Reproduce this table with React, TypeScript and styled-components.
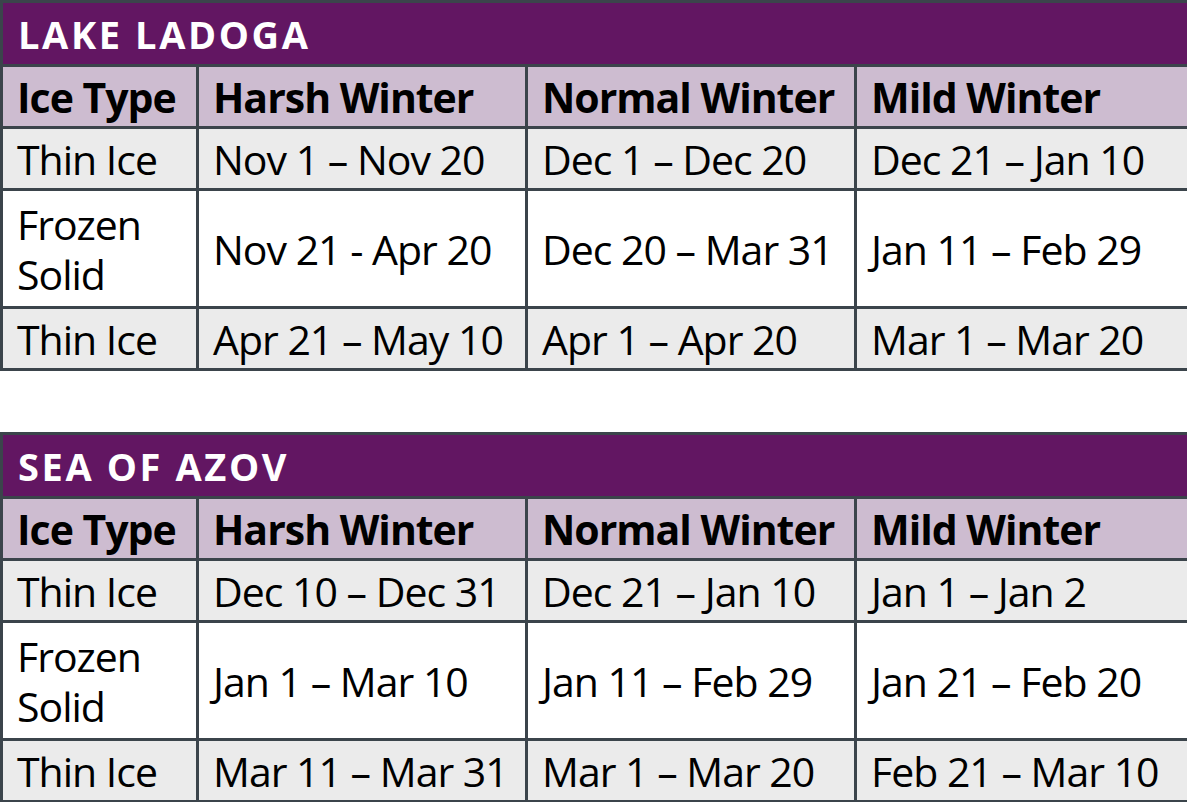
import styled, { createGlobalStyle } from "styled-components";

const GlobalStyle = createGlobalStyle`
  body {
    margin: 0;
    background: #ffffff;
    font-family: "Open Sans", "Noto Sans", sans-serif;
  }
`;

const Page = styled.div`
  display: flex;
  flex-direction: column;
  row-gap: 61px;
  width: 1187px;
`;

const Table = styled.table`
  width: 1187px;
  border-collapse: collapse;
  table-layout: fixed;
  border: 3px solid #3b444b;
`;

const TitleCell = styled.th`
  height: 61px;
  padding: 0 0 0 15px;
  background: #621662;
  color: #ffffff;
  text-align: left;
  font-size: 38px;
  font-weight: 700;
  letter-spacing: 2.6px;
  border: 3px solid #3b444b;
`;

const HeadCell = styled.th`
  height: 59px;
  padding: 0 0 0 14px;
  background: #cdbcd0;
  color: #000000;
  text-align: left;
  font-size: 41px;
  font-weight: 700;
  letter-spacing: -1px;
  white-space: nowrap;
  border: 3px solid #3b444b;
`;

const Row = styled.tr<{ $shade: boolean }>`
  background: ${(p) => (p.$shade ? "#ebebeb" : "#ffffff")};
`;

const Cell = styled.td<{ $tall: boolean }>`
  height: ${(p) => (p.$tall ? "115px" : "59px")};
  padding: 0 0 0 14px;
  color: #000000;
  font-size: 41px;
  line-height: 50px;
  letter-spacing: -1px;
  white-space: nowrap;
  border: 3px solid #3b444b;
`;

const TypeCell = styled(Cell)`
  white-space: normal;
`;

type Lake = {
  name: string;
  rows: { type: string; harsh: string; normal: string; mild: string }[];
};

const lakes: Lake[] = [
  {
    name: "LAKE LADOGA",
    rows: [
      { type: "Thin Ice", harsh: "Nov 1 – Nov 20", normal: "Dec 1 – Dec 20", mild: "Dec 21 – Jan 10" },
      { type: "Frozen Solid", harsh: "Nov 21 - Apr 20", normal: "Dec 20 – Mar 31", mild: "Jan 11 – Feb 29" },
      { type: "Thin Ice", harsh: "Apr 21 – May 10", normal: "Apr 1 – Apr 20", mild: "Mar 1 – Mar 20" },
    ],
  },
  {
    name: "SEA OF AZOV",
    rows: [
      { type: "Thin Ice", harsh: "Dec 10 – Dec 31", normal: "Dec 21 – Jan 10", mild: "Jan 1 – Jan 2" },
      { type: "Frozen Solid", harsh: "Jan 1 – Mar 10", normal: "Jan 11 – Feb 29", mild: "Jan 21 – Feb 20" },
      { type: "Thin Ice", harsh: "Mar 11 – Mar 31", normal: "Mar 1 – Mar 20", mild: "Feb 21 – Mar 10" },
    ],
  },
];

const IceTable = ({ lake }: { lake: Lake }) => (
  <Table>
    <colgroup>
      <col style={{ width: 196 }} />
      <col style={{ width: 329 }} />
      <col style={{ width: 329 }} />
      <col style={{ width: 333 }} />
    </colgroup>
    <thead>
      <tr>
        <TitleCell colSpan={4}>{lake.name}</TitleCell>
      </tr>
      <tr>
        <HeadCell>Ice Type</HeadCell>
        <HeadCell>Harsh Winter</HeadCell>
        <HeadCell>Normal Winter</HeadCell>
        <HeadCell>Mild Winter</HeadCell>
      </tr>
    </thead>
    <tbody>
      {lake.rows.map((r, i) => {
        const tall = r.type === "Frozen Solid";
        return (
          <Row key={i} $shade={!tall}>
            <TypeCell $tall={tall}>
              {tall ? (
                <>
                  Frozen
                  <br />
                  Solid
                </>
              ) : (
                r.type
              )}
            </TypeCell>
            <Cell $tall={tall}>{r.harsh}</Cell>
            <Cell $tall={tall}>{r.normal}</Cell>
            <Cell $tall={tall}>{r.mild}</Cell>
          </Row>
        );
      })}
    </tbody>
  </Table>
);

export default function App() {
  return (
    <>
      <GlobalStyle />
      <Page>
        {lakes.map((l) => (
          <IceTable key={l.name} lake={l} />
        ))}
      </Page>
    </>
  );
}
